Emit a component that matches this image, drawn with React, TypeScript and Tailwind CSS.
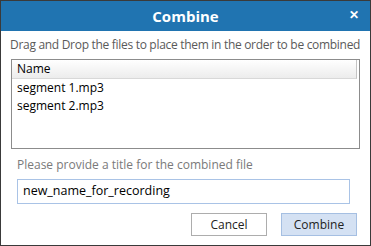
export default function App() {
  const files = ["segment 1.mp3", "segment 2.mp3"];

  return (
    <div className="w-[371px] h-[246px] bg-white border border-[#3a3a3a] flex flex-col font-['Open_Sans',sans-serif] overflow-hidden">
      {/* title bar */}
      <div className="h-[30px] bg-[#2074b1] flex items-center justify-center relative shrink-0">
        <span className="text-white font-bold text-[15px] leading-none">Combine</span>
        <span className="absolute right-[11px] top-[8px] text-white font-bold text-[12px] leading-none">✕</span>
      </div>

      <div className="flex-1 flex flex-col px-[10px]">
        <p className="text-[12px] text-[#5a5a5a] leading-none mt-[8px] -ml-[1px] tracking-[-0.3px] whitespace-nowrap">
          Drag and Drop the files to place them in the order to be combined
        </p>

        {/* file list */}
        <div className="mt-[8px] h-[90px] border border-[#8c8c8c] flex flex-col">
          <div className="h-[19px] flex items-center px-[5px] text-[12px] text-black bg-gradient-to-b from-white to-[#ececec] border-b border-[#d8d8d8] mr-[2px] border-r border-r-[#c4c4c4]">
            Name
          </div>
          {files.map((f) => (
            <div key={f} className="h-[18px] flex items-center px-[5px] text-[12px] text-black">
              {f}
            </div>
          ))}
        </div>

        <p className="text-[12px] text-[#7a7a7a] leading-none mt-[10px] ml-[6px]">
          Please provide a title for the combined file
        </p>

        <div className="mt-[8px] ml-[6px] w-[333px] h-[25px] border border-[#a9c3e6] flex items-center px-[5px] text-[12.5px] text-black">
          new_name_for_recording
        </div>

        <div className="mt-[9px] flex justify-end gap-[14px] pr-[3px]">
          <button className="w-[76px] h-[23px] border border-[#adadad] bg-white text-[12px] text-[#222]">
            Cancel
          </button>
          <button className="w-[76px] h-[23px] border border-[#a5bfe2] bg-[#d4e1f3] text-[12px] text-[#222]">
            Combine
          </button>
        </div>
      </div>
    </div>
  );
}
